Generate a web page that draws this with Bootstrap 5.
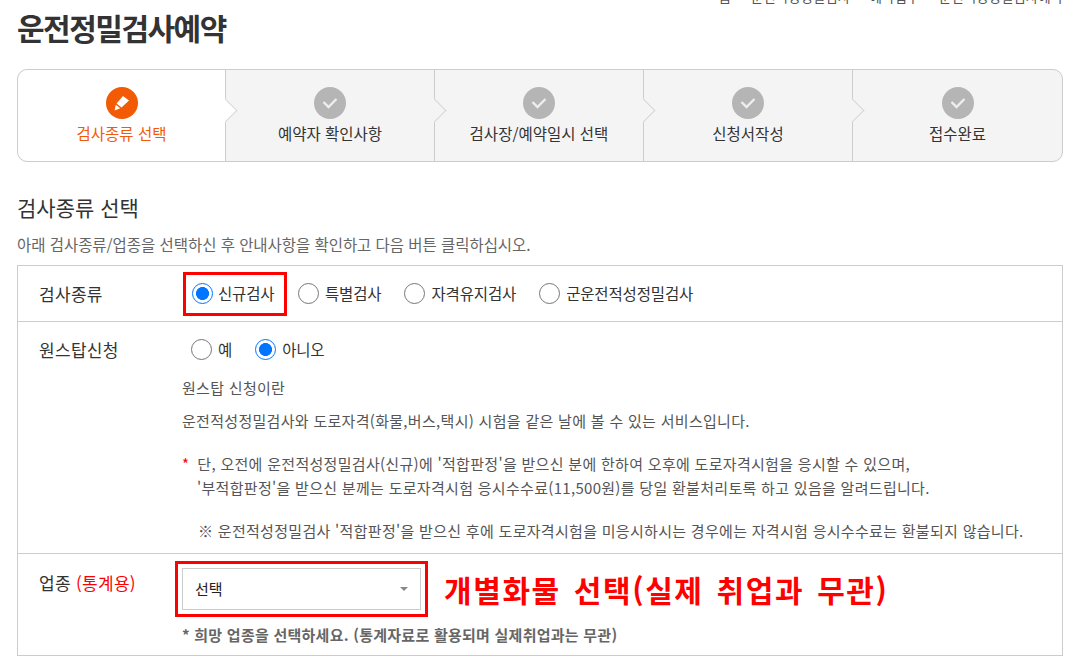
<!DOCTYPE html>
<html lang="ko">
<head>
<meta charset="UTF-8">
<title>운전정밀검사예약</title>
<link href="https://cdn.jsdelivr.net/npm/bootstrap@5.3.0/dist/css/bootstrap.min.css" rel="stylesheet">
<style>
html, body { height: 667px; overflow: hidden; }
body { font-family: "Noto Sans CJK KR", "Noto Sans", sans-serif; color: #333; background: #fff; font-size: 15px; }
.page-wrap { padding: 0 12px 0 17px; margin-top: -11px; }
.crumbs { font-size: 13.5px; color: #555; height: 14px; line-height: 14px; }
.crumbs i { font-style: normal; color: #aaa; margin: 0 6px; }
.page-title { font-size: 30px; font-weight: 700; letter-spacing: -1.5px; color: #333; line-height: 40px; margin: 4px 0 22px; }
.steps { border: 1px solid #ccc; border-radius: 10px; height: 93px; background: #f4f4f4; }
.step-item { flex: 0 0 209px; position: relative; text-align: center; padding-top: 17px; border-left: 1px solid #ccc; font-size: 15.5px; }
.step-item:first-child { flex: 0 0 207px; border-left: 0; background: #fff; border-radius: 10px 0 0 10px; color: #f25a05; }
.step-item:last-child { flex: 1 1 0; }
.step-item:not(:last-child)::after { content: ""; position: absolute; z-index: 1; top: 32px; right: -9px; width: 17px; height: 17px; background: #f4f4f4; border-top: 1px solid #d5d5d5; border-right: 1px solid #d5d5d5; transform: rotate(45deg); }
.step-item:first-child::after { background: #fff; }
.step-ico { display: block; width: 32px; height: 32px; margin: 0 auto 2px; }
.step-text { display: block; line-height: 24px; }
.sect-title { font-size: 21px; font-weight: 400; line-height: 28px; margin: 31px 0 13px; color: #333; }
.sect-desc { font-size: 15.5px; letter-spacing: -0.05px; color: #666; line-height: 20px; margin-bottom: 11px; }
.form-box { border: 1px solid #ccc; }
.form-line { display: flex; border-bottom: 1px solid #ccc; }
.form-line:last-child { border-bottom: 0; }
.line-label { width: 157px; flex: none; padding-left: 21px; font-size: 17px; letter-spacing: 0.3px; }
.radio-pick { display: inline-flex; align-items: center; gap: 6px; font-size: 15.5px; letter-spacing: -0.15px; margin: 0; }
.radio-next { margin-left: 23px; }
.radio-pick .form-check-input { width: 21px; height: 21px; margin: 0; flex: none; border: 1px solid #767676; float: none; }
.radio-pick .form-check-input:checked { background-color: #fff; border: 1.5px solid #0075ff; background-image: radial-gradient(circle, #0075ff 0 6.2px, #fff 6.8px); }
.mark-box { border: 3px solid #f00; display: inline-flex; width: 104px; height: 44px; margin-left: 4px; padding-left: 6px; }
.mark-box .radio-pick { gap: 5px; }
.info-text { color: #555; font-size: 15px; letter-spacing: 0.3px; padding-left: 7px; }
.info-text p { margin: 0; }
.star { color: #f00; }
.pick-box { border: 3px solid #f00; padding: 4px; width: 253px; height: 56px; }
.pick-box .form-select { border: 1px solid #ccc; border-radius: 0; height: 42px; font-size: 15px; color: #222; padding: 0 12px; background-image: url("data:image/svg+xml,%3Csvg xmlns='http://www.w3.org/2000/svg' viewBox='0 0 8 4'%3E%3Cpath d='M0 0h8L4 4z' fill='%23888'/%3E%3C/svg%3E"); background-position: right 12px center; background-size: 8px 4px; }
.red-note { color: #f00; font-size: 30px; font-weight: 700; letter-spacing: 1.6px; word-spacing: 3px; line-height: 40px; white-space: nowrap; }
.pick-note { font-size: 15px; font-weight: 700; letter-spacing: 0.25px; color: #666; padding-left: 7px; margin-top: 7px; }
</style>
</head>
<body>
<div class="page-wrap">
    <div class="crumbs text-end">홈<i>&gt;</i>운전적성정밀검사<i>&gt;</i>예약접수<i>&gt;</i>운전적성정밀검사예약</div>
    <h1 class="page-title">운전정밀검사예약</h1>

    <!-- 단계 표시 -->
    <div class="steps d-flex">
        <div class="step-item">
            <svg class="step-ico" viewBox="0 0 32 32"><circle cx="16" cy="16" r="16" fill="#f25a05"/><path d="M17 9l6 4.5-7.5 7-5-4zM9.8 17.8l4.4 3.4-5.6 2.3z" fill="#fff"/></svg>
            <span class="step-text">검사종류 선택</span>
        </div>
        <div class="step-item">
            <svg class="step-ico" viewBox="0 0 32 32"><circle cx="16" cy="16" r="16" fill="#b5b5b5"/><path d="M9.5 15l5 5 8-8" fill="none" stroke="#eee" stroke-width="2.4"/></svg>
            <span class="step-text">예약자 확인사항</span>
        </div>
        <div class="step-item">
            <svg class="step-ico" viewBox="0 0 32 32"><circle cx="16" cy="16" r="16" fill="#b5b5b5"/><path d="M9.5 15l5 5 8-8" fill="none" stroke="#eee" stroke-width="2.4"/></svg>
            <span class="step-text">검사장/예약일시 선택</span>
        </div>
        <div class="step-item">
            <svg class="step-ico" viewBox="0 0 32 32"><circle cx="16" cy="16" r="16" fill="#b5b5b5"/><path d="M9.5 15l5 5 8-8" fill="none" stroke="#eee" stroke-width="2.4"/></svg>
            <span class="step-text">신청서작성</span>
        </div>
        <div class="step-item">
            <svg class="step-ico" viewBox="0 0 32 32"><circle cx="16" cy="16" r="16" fill="#b5b5b5"/><path d="M9.5 15l5 5 8-8" fill="none" stroke="#eee" stroke-width="2.4"/></svg>
            <span class="step-text">접수완료</span>
        </div>
    </div>

    <h2 class="sect-title">검사종류 선택</h2>
    <p class="sect-desc">아래 검사종류/업종을 선택하신 후 안내사항을 확인하고 다음 버튼 클릭하십시오.</p>

    <div class="form-box">
        <div class="form-line align-items-center" style="height:56px">
            <div class="line-label">검사종류</div>
            <div class="d-flex align-items-center ps-1">
                <div class="mark-box align-items-center">
                    <label class="radio-pick"><input class="form-check-input" type="radio" name="kind" checked>신규검사</label>
                </div>
                <label class="radio-pick radio-next" style="margin-left:11px"><input class="form-check-input" type="radio" name="kind">특별검사</label>
                <label class="radio-pick radio-next"><input class="form-check-input" type="radio" name="kind">자격유지검사</label>
                <label class="radio-pick radio-next"><input class="form-check-input" type="radio" name="kind">군운전적성정밀검사</label>
            </div>
        </div>
        <div class="form-line" style="height:232px">
            <div class="line-label" style="padding-top:15px">원스탑신청</div>
            <div class="flex-grow-1 pt-3">
                <div class="d-flex" style="padding-left:16px">
                    <label class="radio-pick"><input class="form-check-input" type="radio" name="stop">예</label>
                    <label class="radio-pick radio-next"><input class="form-check-input" type="radio" name="stop" checked>아니오</label>
                </div>
                <div class="info-text">
                    <p style="margin-top:16px;line-height:22px">원스탑 신청이란</p>
                    <p style="margin-top:11px;line-height:22px">운전적성정밀검사와 도로자격(화물,버스,택시) 시험을 같은 날에 볼 수 있는 서비스입니다.</p>
                    <p style="margin-top:20px;line-height:24px"><span class="star me-2">*</span>단, 오전에 운전적성정밀검사(신규)에 '적합판정'을 받으신 분에 한하여 오후에 도로자격시험을 응시할 수 있으며,<br><span style="padding-left:15px">'부적합판정'을 받으신 분께는 도로자격시험 응시수수료(11,500원)를 당일 환불처리토록 하고 있음을 알려드립니다.</span></p>
                    <p style="margin-top:20px;line-height:22px;padding-left:16px">※ 운전적성정밀검사 '적합판정'을 받으신 후에 도로자격시험을 미응시하시는 경우에는 자격시험 응시수수료는 환불되지 않습니다.</p>
                </div>
            </div>
        </div>
        <div class="form-line" style="height:101px">
            <div class="line-label" style="padding-top:16px">업종 <span class="star">(통계용)</span></div>
            <div>
                <div class="d-flex align-items-center" style="margin-top:7px">
                    <div class="pick-box"><select class="form-select"><option>선택</option></select></div>
                    <div class="red-note ms-3">개별화물 선택(실제 취업과 무관)</div>
                </div>
                <div class="pick-note">* 희망 업종을 선택하세요. (통계자료로 활용되며 실제취업과는 무관)</div>
            </div>
        </div>
    </div>
</div>
</body>
</html>
